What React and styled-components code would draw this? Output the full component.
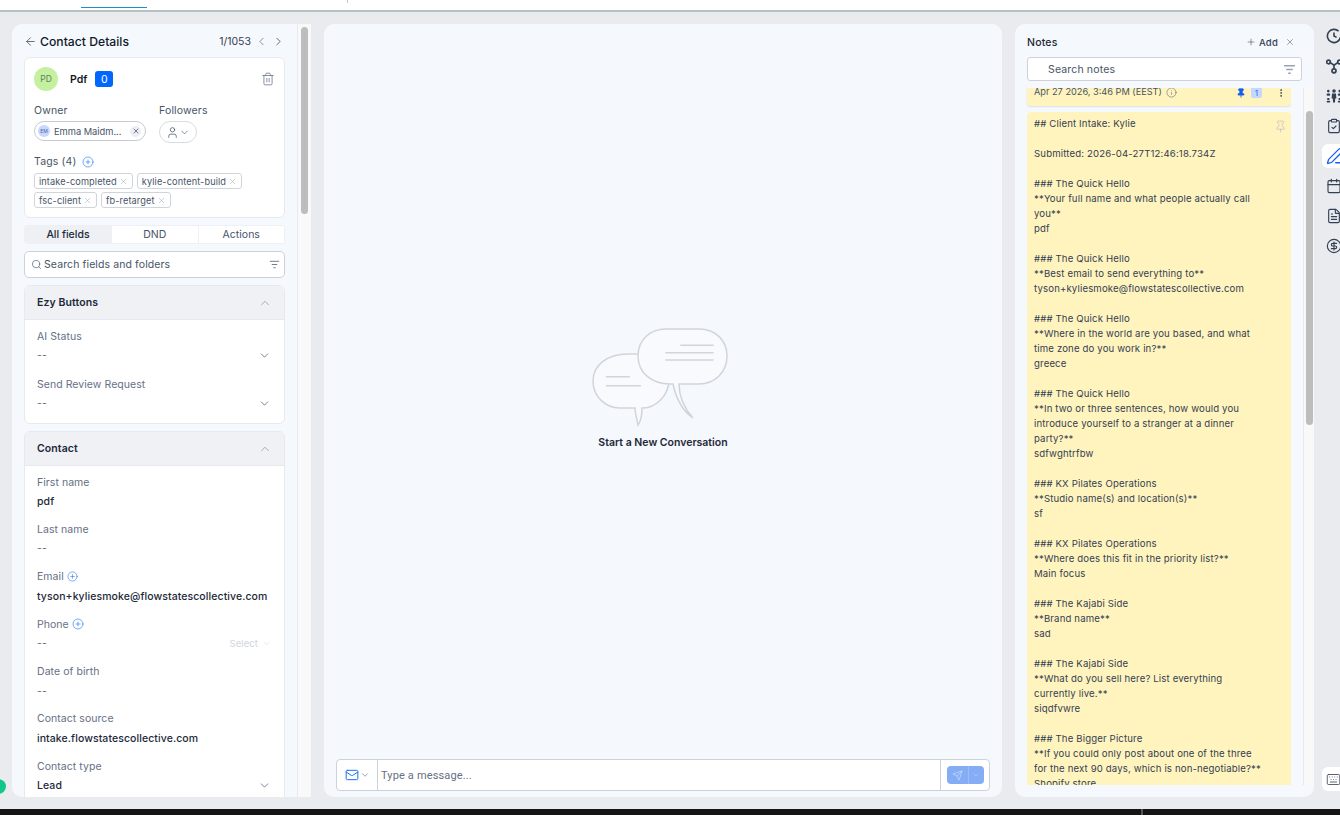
import React from "react";
import styled, { createGlobalStyle } from "styled-components";
import {
  ArrowLeft,
  ChevronLeft,
  ChevronRight,
  ChevronDown,
  ChevronUp,
  Trash2,
  X,
  User,
  CirclePlus,
  Search,
  Plus,
  Pin,
  Info,
  MoreVertical,
  ClipboardCheck,
  PenLine,
  Calendar,
  FileText,
  CircleDollarSign,
  Keyboard,
  Mail,
  Send,
} from "lucide-react";

const GlobalStyle = createGlobalStyle`
  html, body {
    margin: 0;
    padding: 0;
    height: 815px;
    overflow: hidden;
    background: #e9ebef;
    font-family: Inter, "Noto Sans", sans-serif;
    color: #344054;
  }
  * { box-sizing: border-box; }
`;

const noteText = `## Client Intake: Kylie

Submitted: 2026-04-27T12:46:18.734Z

### The Quick Hello
**Your full name and what people actually call
you**
pdf

### The Quick Hello
**Best email to send everything to**
tyson+kyliesmoke@flowstatescollective.com

### The Quick Hello
**Where in the world are you based, and what
time zone do you work in?**
greece

### The Quick Hello
**In two or three sentences, how would you
introduce yourself to a stranger at a dinner
party?**
sdfwghtrfbw

### KX Pilates Operations
**Studio name(s) and location(s)**
sf

### KX Pilates Operations
**Where does this fit in the priority list?**
Main focus

### The Kajabi Side
**Brand name**
sad

### The Kajabi Side
**What do you sell here? List everything
currently live.**
siqdfvwre

### The Bigger Picture
**If you could only post about one of the three
for the next 90 days, which is non-negotiable?**
Shopify store`;

const Page = styled.div`
  position: relative;
  width: 1340px;
  height: 815px;
  display: flex;
  flex-direction: column;
  overflow: hidden;
`;

const TopBar = styled.div`
  height: 12px;
  flex: none;
  background: #fff;
  border-bottom: 2px solid #b4c2c2;
  display: flex;
  align-items: flex-start;
`;

const ActiveTab = styled.div`
  width: 66px;
  height: 8px;
  margin-left: 81px;
  border-bottom: 1px solid #1b8fc6;
`;

const Tick = styled.div`
  width: 1px;
  height: 3px;
  margin-left: 200px;
  background: #c8c8c8;
`;

const Main = styled.div`
  flex: 1;
  min-height: 0;
  display: flex;
  padding: 12px 0 12px 12px;
`;

const LeftPanel = styled.div`
  width: 286px;
  flex: none;
  background: #f5f8fd;
  border-right: 1px solid #e6e9ef;
  border-radius: 10px 0 0 10px;
  padding: 0 12px;
  overflow: hidden;
`;

const ScrollTrack = styled.div`
  width: 13px;
  flex: none;
  background: #f9f9f9;
  padding: 3px 3px 0;
`;

const ScrollThumb = styled.div`
  height: ${(p) => p.$h}px;
  background: #bdbdbd;
  border-radius: 4px;
`;

const HeaderRow = styled.div`
  height: 33px;
  padding-top: 2px;
  display: flex;
  align-items: center;
  color: #101828;
`;

const HeaderTitle = styled.div`
  font-size: 12.2px;
  font-weight: 500;
  margin-left: 3px;
  flex: 1;
`;

const Pager = styled.div`
  display: flex;
  align-items: center;
  gap: 4px;
  font-size: 10.5px;
  color: #344054;
`;

const ContactCard = styled.div`
  height: 161px;
  background: #fff;
  border: 1px solid #e6e9ef;
  border-radius: 6px;
  padding: 9px 9px 0;
`;

const NameRow = styled.div`
  display: flex;
  align-items: center;
  height: 24px;
`;

const Avatar = styled.div`
  width: 24px;
  height: 24px;
  border-radius: 50%;
  background: #c4f09f;
  color: #5f7f5f;
  font-size: 8.5px;
  display: flex;
  align-items: center;
  justify-content: center;
`;

const Name = styled.div`
  font-size: 10.5px;
  font-weight: 600;
  color: #101828;
  margin-left: 12px;
`;

const Badge = styled.div`
  width: 18px;
  height: 16px;
  margin-left: 8px;
  border-radius: 3px;
  background: #0066ff;
  color: #fff;
  font-size: 10.5px;
  display: flex;
  align-items: center;
  justify-content: center;
`;

const TrashButton = styled.div`
  margin-left: auto;
  display: flex;
  color: #667085;
`;

const OwnerRow = styled.div`
  display: flex;
  margin-top: 13px;
`;

const OwnerColumn = styled.div`
  width: ${(p) => p.$w}px;
  flex: none;
`;

const SmallLabel = styled.div`
  font-size: 10.5px;
  line-height: 14px;
  color: #475467;
  letter-spacing: 0.15px;
`;

const OwnerChip = styled.div`
  width: 112px;
  height: 20px;
  margin-top: 3px;
  border: 1px solid #c5cad3;
  border-radius: 10px;
  display: flex;
  align-items: center;
  padding: 0 3px;
  font-size: 9.3px;
  color: #475467;
`;

const ChipAvatar = styled.div`
  width: 12px;
  height: 12px;
  flex: none;
  border-radius: 50%;
  background: #c7d7fe;
  color: #4b64a0;
  font-size: 5px;
  display: flex;
  align-items: center;
  justify-content: center;
  margin-right: 4px;
`;

const ChipClose = styled.div`
  width: 11px;
  height: 11px;
  margin-left: auto;
  margin-right: 1px;
  border-radius: 50%;
  background: #eceef1;
  display: flex;
  align-items: center;
  justify-content: center;
  color: #344054;
`;

const FollowerChip = styled.div`
  width: 38px;
  height: 22px;
  margin-top: 3px;
  border: 1px solid #d8dce3;
  border-radius: 11px;
  display: flex;
  align-items: center;
  justify-content: space-between;
  padding: 0 6px;
  color: #475467;
`;

const TagsLabel = styled.div`
  display: flex;
  align-items: center;
  gap: 6px;
  margin-top: 12px;
  color: #1570ef;
`;

const TagList = styled.div`
  display: flex;
  flex-wrap: wrap;
  column-gap: 4px;
  row-gap: 3px;
  margin-top: 4px;
  width: 230px;
`;

const Tag = styled.div`
  height: 16px;
  padding: 0 4px;
  border: 1px solid #d0d5dd;
  border-radius: 3px;
  font-size: 9.2px;
  color: #475467;
  letter-spacing: 0.1px;
  display: flex;
  align-items: center;
  gap: 2px;
  svg { color: #98a2b3; }
`;

const Tabs = styled.div`
  height: 19px;
  margin-top: 7px;
  display: flex;
  background: #fff;
  border-radius: 3px;
  overflow: hidden;
  border: 1px solid #edf0f4;
`;

const TabItem = styled.div`
  flex: ${(p) => (p.$active ? "0 0 86px" : "1")};
  font-size: 10.5px;
  font-weight: ${(p) => (p.$active ? 500 : 400)};
  color: ${(p) => (p.$active ? "#1d2939" : "#475467")};
  background: ${(p) => (p.$active ? "#eef0f4" : "#fff")};
  border-left: ${(p) => (p.$active ? "none" : "1px solid #edf0f4")};
  display: flex;
  align-items: center;
  justify-content: center;
`;

const FieldSearch = styled.div`
  height: 27px;
  margin-top: 7px;
  background: #fff;
  border: 1px solid #cdd2da;
  border-radius: 5px;
  display: flex;
  align-items: center;
  padding: 0 4px 0 6px;
  font-size: 10.5px;
  color: #475467;
  letter-spacing: 0.1px;
  gap: 2px;
`;

const FilterIcon = styled.svg`
  margin-left: auto;
  flex: none;
  color: ${(p) => p.$tone || "#667085"};
`;

const Section = styled.div`
  margin-top: ${(p) => p.$top}px;
  background: #fff;
  border: 1px solid #e6e9ef;
  border-radius: 6px;
  overflow: hidden;
`;

const SectionHead = styled.div`
  height: 34px;
  background: #eff1f5;
  border-bottom: 1px solid #e6e9ef;
  display: flex;
  align-items: center;
  justify-content: space-between;
  padding: 0 12px;
  font-size: 10.5px;
  font-weight: 600;
  color: #1d2939;
  letter-spacing: 0.1px;
  svg { color: #98a2b3; }
`;

const SectionBody = styled.div`
  padding: 8px 12px 0;
`;

const Field = styled.div`
  height: ${(p) => p.$h || 47.4}px;
`;

const FieldLabel = styled.div`
  display: flex;
  align-items: center;
  gap: 3px;
  height: 16px;
  font-size: 10.5px;
  color: #667085;
  letter-spacing: 0.05px;
  svg { color: #1570ef; }
`;

const FieldValue = styled.div`
  display: flex;
  align-items: center;
  justify-content: space-between;
  height: 16px;
  margin-top: 3.5px;
  font-size: 10.5px;
  color: ${(p) => (p.$empty ? "#667085" : "#1d2939")};
  font-weight: ${(p) => (p.$empty ? 400 : 500)};
  letter-spacing: 0.08px;
  svg { color: #475467; margin-right: 1px; }
`;

const SelectHint = styled.span`
  display: flex;
  align-items: center;
  gap: 4px;
  font-size: 9.5px;
  font-weight: 400;
  color: #d0d5dd;
  svg { color: #d0d5dd; }
`;

const CenterPanel = styled.div`
  width: 678px;
  flex: none;
  margin-left: 13px;
  background: #f5f8fd;
  border-radius: 10px;
  display: flex;
  flex-direction: column;
  padding: 0 12px 6px;
`;

const EmptyState = styled.div`
  flex: 1;
  display: flex;
  flex-direction: column;
  align-items: center;
  justify-content: center;
  padding-bottom: 8px;
`;

const EmptyTitle = styled.div`
  margin-top: 8px;
  font-size: 10.5px;
  font-weight: 600;
  color: #1d2939;
`;

const Composer = styled.div`
  height: 32px;
  flex: none;
  background: #fff;
  border: 1px solid #cdd2da;
  border-radius: 4px;
  display: flex;
  align-items: stretch;
`;

const ChannelPicker = styled.div`
  width: 41px;
  border-right: 1px solid #cdd2da;
  display: flex;
  align-items: center;
  padding-left: 8px;
  gap: 1px;
  color: #1570ef;
  svg + svg { color: #475467; }
`;

const MessagePlaceholder = styled.div`
  flex: 1;
  display: flex;
  align-items: center;
  padding-left: 3px;
  font-family: Roboto, sans-serif;
  font-size: 11px;
  letter-spacing: 0.15px;
  color: #667085;
`;

const SendArea = styled.div`
  width: 49px;
  border-left: 1px solid #cdd2da;
  display: flex;
  align-items: center;
  justify-content: center;
`;

const SendButton = styled.div`
  width: 37px;
  height: 18px;
  background: #84adf5;
  border-radius: 4px;
  display: flex;
  align-items: center;
  color: #d6e4fc;
`;

const SendIcon = styled.div`
  flex: 1;
  display: flex;
  align-items: center;
  justify-content: center;
  height: 100%;
  border-right: 1px solid #9dbdf7;
`;

const SendCaret = styled.div`
  width: 15px;
  display: flex;
  justify-content: center;
`;

const NotesPanel = styled.div`
  width: 299px;
  flex: none;
  margin-left: 13px;
  background: #f5f8fd;
  border-radius: 10px;
  display: flex;
  flex-direction: column;
  overflow: hidden;
`;

const NotesHead = styled.div`
  height: 33px;
  flex: none;
  display: flex;
  align-items: center;
  padding: 3px 19px 0 12px;
  font-size: 10.5px;
  font-weight: 500;
  color: #1d2939;
  letter-spacing: 0.2px;
`;

const AddButton = styled.div`
  margin-left: auto;
  margin-right: 7px;
  display: flex;
  align-items: center;
  gap: 3px;
  font-size: 9.5px;
  color: #344054;
`;

const NotesSearch = styled.div`
  height: 24px;
  flex: none;
  margin: 0 12px;
  background: #fff;
  border: 1px solid #cdd2da;
  border-radius: 3px;
  display: flex;
  align-items: center;
  padding: 0 5px 0 20px;
  font-size: 10.5px;
  letter-spacing: 0.15px;
  color: #475467;
`;

const NotesBody = styled.div`
  flex: 1;
  min-height: 0;
  margin-top: 7px;
  margin-bottom: 12px;
  display: flex;
`;

const NotesList = styled.div`
  width: 276px;
  flex: none;
  padding-left: 12px;
  overflow: hidden;
`;

const NotesTrack = styled.div`
  width: 11px;
  margin-left: 12px;
  flex: none;
  background: #f9f9f9;
  border-left: 1px solid #e6e9ef;
  padding: 23px 1px 0 2px;
`;

const NoteStub = styled.div`
  height: 18px;
  width: 264px;
  background: #fff4bd;
  border-radius: 0 0 4px 4px;
  box-shadow: 0 1px 2px rgba(16, 24, 40, 0.1);
  display: flex;
  align-items: flex-end;
  padding: 0 5px 8px 7px;
  overflow: hidden;
  font-size: 9.2px;
  line-height: 12px;
  color: #475467;
`;

const StubMeta = styled.div`
  margin-left: auto;
  display: flex;
  align-items: center;
  svg { color: #344054; }
`;

const StubCount = styled.div`
  width: 11px;
  height: 11px;
  margin: 0 14px 0 5px;
  background: #c7d7fe;
  border-radius: 2px;
  color: #1570ef;
  font-size: 8px;
  text-align: center;
`;

const NoteCard = styled.div`
  position: relative;
  width: 264px;
  margin-top: 6px;
  background: #fff4bd;
  border-radius: 4px 4px 0 0;
  padding: 4px 7px 0;
  white-space: pre;
  font-size: 9.6px;
  line-height: 15px;
  letter-spacing: 0.15px;
  color: #344054;
`;

const NotePin = styled.div`
  position: absolute;
  top: 8px;
  right: 4px;
  color: #b8bfc9;
  display: flex;
`;

const Rail = styled.div`
  flex: 1;
  margin-left: 8px;
  display: flex;
  flex-direction: column;
  gap: 6px;
  padding-bottom: 6px;
  overflow: hidden;
`;

const RailButton = styled.div`
  width: 24px;
  height: 24px;
  flex: none;
  display: flex;
  align-items: center;
  padding-left: 4px;
  border-radius: 6px;
  color: ${(p) => (p.$active ? "#155eef" : "#344054")};
  margin-top: ${(p) => (p.$bottom ? "auto" : "0")};
  background: ${(p) => (p.$active || p.$bottom ? "#fff" : "transparent")};
  svg { flex: none; }
`;

const Footer = styled.div`
  height: 6px;
  flex: none;
  background: #141414;
  display: flex;
`;

const FooterTick = styled.div`
  width: 2px;
  margin-left: 1141px;
  background: #555;
`;

const StatusDot = styled.div`
  position: absolute;
  left: -9px;
  top: 779px;
  width: 15px;
  height: 15px;
  border-radius: 50%;
  background: #10c78a;
`;

const Filter = ({ size = 11, weight = 1, tone }) => (
  <FilterIcon $tone={tone} width={size} height={size} viewBox="0 0 12 12" fill="none" stroke="currentColor" strokeWidth={weight}>
    <path d="M1 2.5h10M3 6h6M4.8 9.5h2.4" />
  </FilterIcon>
);

const ClockIcon = () => (
  <svg width="16" height="16" viewBox="0 0 16 16" fill="none" stroke="currentColor" strokeWidth="1.6">
    <path d="M14.5 9.2A6.6 6.6 0 1 1 12.6 3.2" />
    <path d="M8 4.4V8l2.6 1.4" />
  </svg>
);

const NetworkIcon = () => (
  <svg width="16" height="16" viewBox="0 0 16 16" fill="none" stroke="currentColor" strokeWidth="1.7">
    <circle cx="2.5" cy="4" r="1.8" />
    <circle cx="13.5" cy="4" r="1.8" />
    <circle cx="8" cy="12.8" r="2" />
    <path d="M4.3 4.6 8 7.2l3.7-2.6M8 7.2v3.6" />
  </svg>
);

const TeamIcon = () => (
  <svg width="16" height="16" viewBox="0 0 16 16" fill="currentColor">
    <circle cx="8" cy="3" r="1.8" />
    <path d="M6 5.6h4l.4 5H9.2L9 14.5H7l-.2-3.9H5.6z" />
    <rect x="1" y="1.8" width="2.6" height="2.6" rx="1.3" />
    <rect x="12.4" y="1.8" width="2.6" height="2.6" rx="1.3" />
    <rect x="0.6" y="5.4" width="3.6" height="2.4" rx="1" />
    <rect x="11.8" y="5.4" width="3.6" height="2.4" rx="1" />
    <rect x="1" y="10" width="2.6" height="2" rx="1" />
    <rect x="12.4" y="10" width="2.6" height="2" rx="1" />
    <rect x="0.6" y="12.8" width="3.6" height="1.8" rx="0.8" />
    <rect x="11.8" y="12.8" width="3.6" height="1.8" rx="0.8" />
  </svg>
);

const EmptyArt = () => (
  <svg width="146" height="102" viewBox="20 15 146 102" fill="#f8fafd" stroke="#d0d5dd" strokeWidth="1.5">
    <path d="M58 43h24c10 0 17 12 17 26 0 16-14 28-26 28h-1c0 7-1 13-4 17 -1-6-3-12-3-17H50C35 97 23 85 23 70s13-27 35-27z" />
    <path d="M96 18h33c17 0 28 12 28 27 0 16-12 28-28 28h-20c0 12 5 24 14 34 -10-7-17-20-20-34h-3C82 73 68 62 68 45c0-16 12-27 28-27z" />
    <path d="M110.3 34.3h33.3M95.3 41.7h48.3M95.3 49h48.3M36 65.7h24M36 74.7h35" strokeWidth="1.5" />
  </svg>
);

const tags = [
  "intake-completed",
  "kylie-content-build",
  "fsc-client",
  "fb-retarget",
];

const railIcons = [
  <ClockIcon />,
  <NetworkIcon />,
  <TeamIcon />,
  <ClipboardCheck size={16} strokeWidth={1.7} />,
  <PenLine size={18} strokeWidth={1.7} />,
  <Calendar size={16} strokeWidth={1.7} />,
  <FileText size={16} strokeWidth={1.7} />,
  <CircleDollarSign size={16} strokeWidth={1.7} />,
];

export default function App() {
  return (
    <Page>
      <GlobalStyle />
      <TopBar>
        <ActiveTab />
        <Tick />
      </TopBar>
      <Main>
        <LeftPanel>
          <HeaderRow>
            <ArrowLeft size={13} strokeWidth={1.5} color="#475467" />
            <HeaderTitle>Contact Details</HeaderTitle>
            <Pager>
              1/1053
              <ChevronLeft size={13} strokeWidth={1.4} color="#667085" />
              <ChevronRight size={13} strokeWidth={1.4} color="#344054" />
            </Pager>
          </HeaderRow>
          <ContactCard>
            <NameRow>
              <Avatar>PD</Avatar>
              <Name>Pdf</Name>
              <Badge>0</Badge>
              <TrashButton>
                <Trash2 size={14} strokeWidth={1.3} />
              </TrashButton>
            </NameRow>
            <OwnerRow>
              <OwnerColumn $w={125}>
                <SmallLabel>Owner</SmallLabel>
                <OwnerChip>
                  <ChipAvatar>EM</ChipAvatar>
                  Emma Maidm...
                  <ChipClose>
                    <X size={8} strokeWidth={2} />
                  </ChipClose>
                </OwnerChip>
              </OwnerColumn>
              <OwnerColumn $w={60}>
                <SmallLabel>Followers</SmallLabel>
                <FollowerChip>
                  <User size={13} strokeWidth={1.4} />
                  <ChevronDown size={11} strokeWidth={1.4} />
                </FollowerChip>
              </OwnerColumn>
            </OwnerRow>
            <TagsLabel>
              <SmallLabel>Tags (4)</SmallLabel>
              <CirclePlus size={12} strokeWidth={1.2} />
            </TagsLabel>
            <TagList>
              {tags.map((t) => (
                <Tag key={t}>
                  {t}
                  <X size={9} strokeWidth={1.3} />
                </Tag>
              ))}
            </TagList>
          </ContactCard>
          <Tabs>
            <TabItem $active>All fields</TabItem>
            <TabItem>DND</TabItem>
            <TabItem>Actions</TabItem>
          </Tabs>
          <FieldSearch>
            <Search size={11} strokeWidth={1.4} color="#475467" />
            Search fields and folders
            <Filter />
          </FieldSearch>
          <Section $top={7}>
            <SectionHead>
              Ezy Buttons
              <ChevronUp size={14} strokeWidth={1.5} />
            </SectionHead>
            <SectionBody>
              <Field $h={48}>
                <FieldLabel>AI Status</FieldLabel>
                <FieldValue $empty>
                  --
                  <ChevronDown size={13} strokeWidth={1.3} />
                </FieldValue>
              </Field>
              <Field $h={47}>
                <FieldLabel>Send Review Request</FieldLabel>
                <FieldValue $empty>
                  --
                  <ChevronDown size={13} strokeWidth={1.3} />
                </FieldValue>
              </Field>
            </SectionBody>
          </Section>
          <Section $top={7}>
            <SectionHead>
              Contact
              <ChevronUp size={14} strokeWidth={1.5} />
            </SectionHead>
            <SectionBody>
              <Field>
                <FieldLabel>First name</FieldLabel>
                <FieldValue>pdf</FieldValue>
              </Field>
              <Field>
                <FieldLabel>Last name</FieldLabel>
                <FieldValue $empty>--</FieldValue>
              </Field>
              <Field>
                <FieldLabel>
                  Email <CirclePlus size={11} strokeWidth={1.2} />
                </FieldLabel>
                <FieldValue>tyson+kyliesmoke@flowstatescollective.com</FieldValue>
              </Field>
              <Field>
                <FieldLabel>
                  Phone <CirclePlus size={12} strokeWidth={1.2} />
                </FieldLabel>
                <FieldValue $empty>
                  --
                  <SelectHint>
                    Select
                    <ChevronDown size={9} strokeWidth={1.3} />
                  </SelectHint>
                </FieldValue>
              </Field>
              <Field>
                <FieldLabel>Date of birth</FieldLabel>
                <FieldValue $empty>--</FieldValue>
              </Field>
              <Field>
                <FieldLabel>Contact source</FieldLabel>
                <FieldValue>intake.flowstatescollective.com</FieldValue>
              </Field>
              <Field>
                <FieldLabel>Contact type</FieldLabel>
                <FieldValue>
                  Lead
                  <ChevronDown size={13} strokeWidth={1.3} />
                </FieldValue>
              </Field>
            </SectionBody>
          </Section>
        </LeftPanel>
        <ScrollTrack>
          <ScrollThumb $h={187} />
        </ScrollTrack>
        <CenterPanel>
          <EmptyState>
            <EmptyArt />
            <EmptyTitle>Start a New Conversation</EmptyTitle>
          </EmptyState>
          <Composer>
            <ChannelPicker>
              <Mail size={14} strokeWidth={1.7} />
              <ChevronDown size={10} strokeWidth={1.3} />
            </ChannelPicker>
            <MessagePlaceholder>Type a message...</MessagePlaceholder>
            <SendArea>
              <SendButton>
                <SendIcon>
                  <Send size={11} strokeWidth={1.3} />
                </SendIcon>
                <SendCaret>
                  <ChevronDown size={8} strokeWidth={1.3} />
                </SendCaret>
              </SendButton>
            </SendArea>
          </Composer>
        </CenterPanel>
        <NotesPanel>
          <NotesHead>
            Notes
            <AddButton>
              <Plus size={10} strokeWidth={1.3} />
              Add
            </AddButton>
            <X size={10} strokeWidth={1.3} color="#475467" />
          </NotesHead>
          <NotesSearch>
            Search notes
            <Filter size={13} weight={1.4} tone="#98a2b3" />
          </NotesSearch>
          <NotesBody>
            <NotesList>
              <NoteStub>
                Apr 27 2026, 3:46 PM (EEST)
                <Info size={11} strokeWidth={1.1} style={{ marginLeft: 4 }} />
                <StubMeta>
                  <Pin size={10} strokeWidth={2} color="#155eef" fill="#155eef" />
                  <StubCount>1</StubCount>
                  <MoreVertical size={10} strokeWidth={2} />
                </StubMeta>
              </NoteStub>
              <NoteCard>
                {noteText}
                <NotePin>
                  <Pin size={13} strokeWidth={1.3} />
                </NotePin>
              </NoteCard>
            </NotesList>
            <NotesTrack>
              <ScrollThumb $h={314} />
            </NotesTrack>
          </NotesBody>
        </NotesPanel>
        <Rail>
          {railIcons.map((icon, i) => (
            <RailButton key={i} $active={i === 4}>
              {icon}
            </RailButton>
          ))}
          <RailButton $bottom>
            <Keyboard size={15} strokeWidth={1.3} />
          </RailButton>
        </Rail>
      </Main>
      <Footer>
        <FooterTick />
      </Footer>
      <StatusDot />
    </Page>
  );
}
